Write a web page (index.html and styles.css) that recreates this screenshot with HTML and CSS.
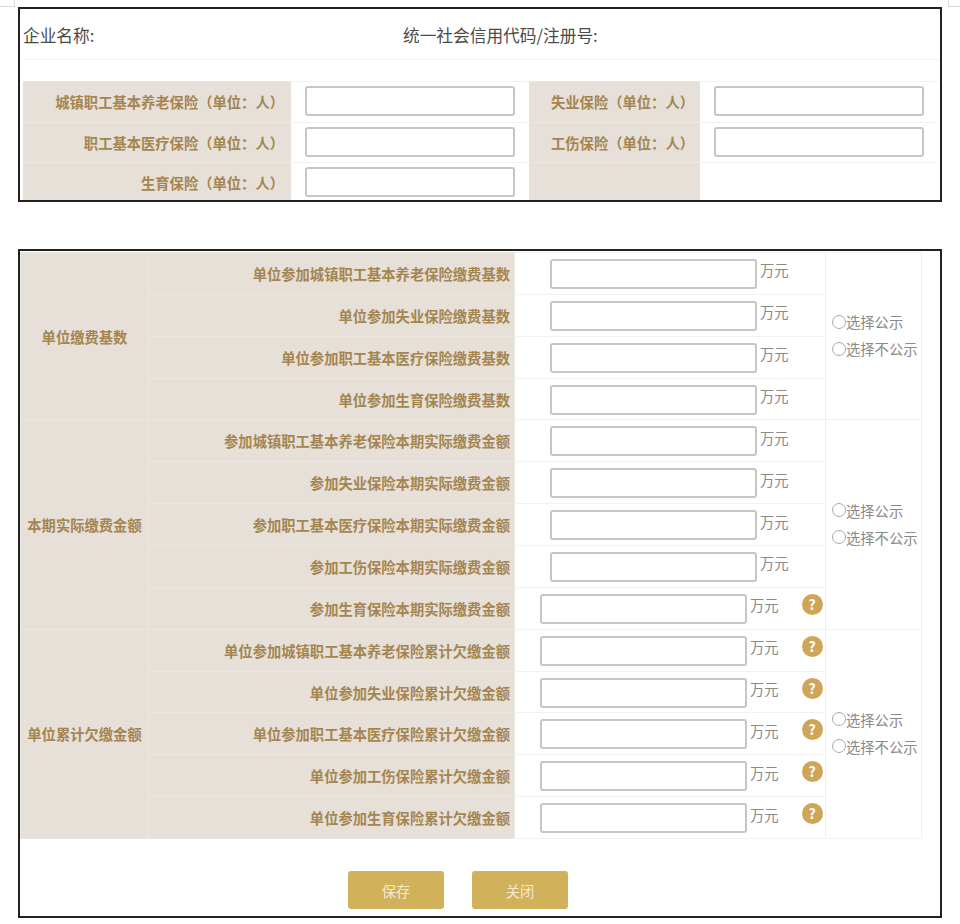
FILE: index.html
```html
<!DOCTYPE html>
<html>

<head>
  <meta charset="UTF-8">
  <title>社保信息</title>
  <link rel="stylesheet" href="styles.css">
</head>

<body>
  <span class="corner corner-left"></span>
  <span class="corner corner-right"></span>

  <div class="box box-top">
    <div class="company">
      <span class="company-name">企业名称:</span>
      <span class="company-code">统一社会信用代码/注册号:</span>
    </div>
    <div class="spacer"></div>
    <table class="people">
      <tr>
        <td class="label">城镇职工基本养老保险（单位：人）</td>
        <td class="field"><input type="text"></td>
        <td class="label">失业保险（单位：人）</td>
        <td class="field"><input type="text"></td>
      </tr>
      <tr>
        <td class="label">职工基本医疗保险（单位：人）</td>
        <td class="field"><input type="text"></td>
        <td class="label">工伤保险（单位：人）</td>
        <td class="field"><input type="text"></td>
      </tr>
      <tr>
        <td class="label">生育保险（单位：人）</td>
        <td class="field"><input type="text"></td>
        <td class="label"></td>
        <td class="field"></td>
      </tr>
    </table>
  </div>

  <div class="box box-bottom">
    <table class="money">
      <colgroup>
        <col class="col-group">
        <col class="col-label">
        <col class="col-field">
        <col class="col-public">
      </colgroup>
      <tr>
        <td class="label group" rowspan="4">单位缴费基数</td>
        <td class="label">单位参加城镇职工基本养老保险缴费基数</td>
        <td class="amount"><div class="amount-row"><input type="text"><span class="unit">万元</span></div></td>
        <td class="public" rowspan="4">
          <label><input type="radio" name="pub1">选择公示</label>
          <label><input type="radio" name="pub1">选择不公示</label>
        </td>
      </tr>
      <tr>
        <td class="label">单位参加失业保险缴费基数</td>
        <td class="amount"><div class="amount-row"><input type="text"><span class="unit">万元</span></div></td>
      </tr>
      <tr>
        <td class="label">单位参加职工基本医疗保险缴费基数</td>
        <td class="amount"><div class="amount-row"><input type="text"><span class="unit">万元</span></div></td>
      </tr>
      <tr>
        <td class="label">单位参加生育保险缴费基数</td>
        <td class="amount"><div class="amount-row"><input type="text"><span class="unit">万元</span></div></td>
      </tr>
      <tr>
        <td class="label group" rowspan="5">本期实际缴费金额</td>
        <td class="label">参加城镇职工基本养老保险本期实际缴费金额</td>
        <td class="amount"><div class="amount-row"><input type="text"><span class="unit">万元</span></div></td>
        <td class="public" rowspan="5">
          <label><input type="radio" name="pub2">选择公示</label>
          <label><input type="radio" name="pub2">选择不公示</label>
        </td>
      </tr>
      <tr>
        <td class="label">参加失业保险本期实际缴费金额</td>
        <td class="amount"><div class="amount-row"><input type="text"><span class="unit">万元</span></div></td>
      </tr>
      <tr>
        <td class="label">参加职工基本医疗保险本期实际缴费金额</td>
        <td class="amount"><div class="amount-row"><input type="text"><span class="unit">万元</span></div></td>
      </tr>
      <tr>
        <td class="label">参加工伤保险本期实际缴费金额</td>
        <td class="amount"><div class="amount-row"><input type="text"><span class="unit">万元</span></div></td>
      </tr>
      <tr>
        <td class="label">参加生育保险本期实际缴费金额</td>
        <td class="amount has-help"><div class="amount-row"><input type="text"><span class="unit">万元</span><span class="help">?</span></div></td>
      </tr>
      <tr>
        <td class="label group" rowspan="5">单位累计欠缴金额</td>
        <td class="label">单位参加城镇职工基本养老保险累计欠缴金额</td>
        <td class="amount has-help"><div class="amount-row"><input type="text"><span class="unit">万元</span><span class="help">?</span></div></td>
        <td class="public" rowspan="5">
          <label><input type="radio" name="pub3">选择公示</label>
          <label><input type="radio" name="pub3">选择不公示</label>
        </td>
      </tr>
      <tr>
        <td class="label">单位参加失业保险累计欠缴金额</td>
        <td class="amount has-help"><div class="amount-row"><input type="text"><span class="unit">万元</span><span class="help">?</span></div></td>
      </tr>
      <tr>
        <td class="label">单位参加职工基本医疗保险累计欠缴金额</td>
        <td class="amount has-help"><div class="amount-row"><input type="text"><span class="unit">万元</span><span class="help">?</span></div></td>
      </tr>
      <tr>
        <td class="label">单位参加工伤保险累计欠缴金额</td>
        <td class="amount has-help"><div class="amount-row"><input type="text"><span class="unit">万元</span><span class="help">?</span></div></td>
      </tr>
      <tr>
        <td class="label">单位参加生育保险累计欠缴金额</td>
        <td class="amount has-help"><div class="amount-row"><input type="text"><span class="unit">万元</span><span class="help">?</span></div></td>
      </tr>
    </table>

    <div class="buttons">
      <button type="button">保存</button>
      <button type="button">关闭</button>
    </div>
  </div>
</body>

</html>
```

FILE: styles.css
```css
* {
  box-sizing: border-box;
}

body {
  margin: 0;
  padding: 7px 18px 0;
  background-color: #fff;
  font-family: "Noto Sans CJK SC", "Liberation Sans", sans-serif;
  font-size: 14.3px;
  color: #8a8a8a;
}

.corner {
  position: absolute;
  top: 0;
  width: 15px;
  height: 7px;
  border-bottom: 1px solid #d8d8d8;
}

.corner-left {
  left: 0;
  border-right: 1px solid #d8d8d8;
}

.corner-right {
  right: 0;
  width: 12px;
  border-left: 1px solid #d8d8d8;
}

.box {
  width: 924px;
  border: 2px solid #222;
  background-color: #fff;
}

.box-top {
  height: 195px;
  padding-left: 3px;
  overflow: hidden;
}

.box-bottom {
  height: 669px;
  margin-top: 47px;
  padding-top: 1px;
}

.company {
  display: flex;
  align-items: center;
  height: 51px;
  padding-top: 2px;
  font-size: 16.7px;
  color: #4a4a4a;
  border-bottom: 1px solid #f3f2f0;
  margin-right: 1px;
}

.company-name {
  width: 380px;
}

.spacer {
  height: 21px;
}

table {
  border-collapse: collapse;
  table-layout: fixed;
}

td {
  padding: 0;
  border: 1px solid #f3f1ee;
}

td.label {
  background-color: #e6e0d9;
  border-color: #ebe7e1;
  color: #a5854f;
  font-weight: bold;
  text-align: right;
  padding-right: 4px;
}

td.group {
  text-align: center;
  padding-right: 0;
}

input[type="text"] {
  height: 30px;
  border: 2px solid #c6c6c6;
  border-radius: 3px;
  background-color: #fff;
  outline: none;
}

.people {
  width: 915px;
}

.people tr {
  height: 40.5px;
}

.people td:nth-child(1) {
  width: 268px;
  padding-right: 7px;
}

.people td:nth-child(2) {
  width: 238px;
}

.people td:nth-child(3) {
  width: 171px;
  padding-right: 6px;
}

.people td {
  border-left: 0;
  border-right: 0;
}

.people .field {
  padding-left: 14px;
}

.people input {
  display: block;
  width: 210px;
  margin-top: -1px;
}

.money {
  width: 901px;
}

.money tr {
  height: 41.86px;
}

.col-group {
  width: 128px;
}

.col-label {
  width: 366px;
}

.col-field {
  width: 311px;
}

.col-public {
  width: 96px;
}

.amount {
  padding-left: 35px;
}

.amount.has-help {
  padding-left: 25px;
}

.amount-row {
  display: flex;
  align-items: center;
  padding-top: 1px;
}

.amount-row input {
  width: 207px;
}

.unit {
  margin-left: 3px;
  margin-top: -8px;
  color: #8a8a8a;
}

.help {
  width: 21px;
  height: 21px;
  margin-left: 23px;
  margin-top: -9px;
  border-radius: 50%;
  background-color: #cfa557;
  color: #fff;
  font-size: 14px;
  font-weight: bold;
  line-height: 21px;
  text-align: center;
}

.public {
  padding-left: 6px;
  padding-bottom: 2px;
}

.public label {
  display: flex;
  align-items: center;
  height: 27px;
  white-space: nowrap;
}

.public input {
  appearance: none;
  width: 14px;
  height: 14px;
  margin: 0;
  border: 1.5px solid #aaa;
  border-radius: 50%;
  background-color: #fff;
}

.buttons {
  display: flex;
  justify-content: center;
  gap: 28px;
  margin-top: 32px;
  padding-right: 44px;
}

.buttons button {
  width: 96px;
  height: 38px;
  border: none;
  border-radius: 3px;
  background-color: #d2b15b;
  color: #f3ead0;
  font-family: inherit;
  font-size: 14.3px;
}
```
